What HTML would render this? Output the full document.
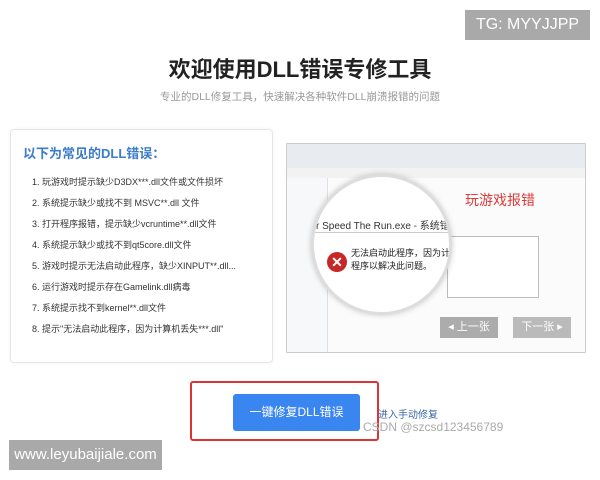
<!DOCTYPE html>
<html><head><meta charset="utf-8"><style>
body{margin:0;width:600px;height:480px;background:#fff;position:relative;overflow:hidden;font-family:"Liberation Sans","Noto Sans CJK SC",sans-serif}
.a{position:absolute}
</style></head><body>
<div class="a" style="left:465px;top:10px;width:125px;height:30px;background:#a9a9a9;color:#fff;font-size:16px;line-height:30px;text-align:center">TG: MYYJJPP</div>
<div class="a" style="left:0;width:600px;top:52px;text-align:center;font-size:22px;font-weight:bold;color:#222">欢迎使用DLL错误专修工具</div>
<div class="a" style="left:0;width:600px;top:89px;text-align:center;font-size:10.5px;color:#999">专业的DLL修复工具，快速解决各种软件DLL崩溃报错的问题</div>
<div class="a" style="left:10px;top:129px;width:261px;height:232px;border:1px solid #e6e6e6;border-radius:4px;box-shadow:0 0 3px rgba(0,0,0,.06)"></div>
<div class="a" style="left:23px;top:143px;font-size:13px;font-weight:bold;color:#3d7cc9">以下为常见的DLL错误：</div>
<div class="a" style="left:32px;top:172px;font-size:9px;color:#333;line-height:21px">
1. 玩游戏时提示缺少D3DX***.dll文件或文件损坏<br>
2. 系统提示缺少或找不到 MSVC**.dll 文件<br>
3. 打开程序报错，提示缺少vcruntime**.dll文件<br>
4. 系统提示缺少或找不到qt5core.dll文件<br>
5. 游戏时提示无法启动此程序，缺少XINPUT**.dll...<br>
6. 运行游戏时提示存在Gamelink.dll病毒<br>
7. 系统提示找不到kernel**.dll文件<br>
8. 提示"无法启动此程序，因为计算机丢失***.dll"</div>
<div class="a" style="left:286px;top:143px;width:298px;height:208px;background:#fbfbfb;border:1px solid #ccc;overflow:hidden">
 <div class="a" style="left:0;top:0;width:298px;height:24px;background:#e8ecf0"></div>
 <div class="a" style="left:0;top:24px;width:298px;height:10px;background:#f2f2f2"></div>
 <div class="a" style="left:0;top:34px;width:40px;height:174px;background:#f7f8f9;border-right:1px solid #e0e0e0"></div>
 <div class="a" style="left:160px;top:92px;width:90px;height:60px;background:#fff;border:1px solid #bbb"></div>
 <div class="a" style="left:24px;top:30px;width:135px;height:135px;border-radius:50%;background:#fff;border:3px solid #ddd;box-shadow:0 0 6px rgba(0,0,0,.2);overflow:hidden">
  <div class="a" style="left:0;top:55px;width:140px;height:1px;background:#ccc"></div>
  <div class="a" style="left:-18px;top:40px;font-size:10px;color:#333;white-space:nowrap">d For Speed The Run.exe - 系统错误</div>
  <div class="a" style="left:13px;top:75px;width:20px;height:20px;border-radius:50%;background:#c62828;color:#fff;font-size:14px;line-height:20px;text-align:center;font-weight:bold">✕</div>
  <div class="a" style="left:37px;top:70px;font-size:9px;color:#222;line-height:13px;white-space:nowrap">无法启动此程序，因为计算机中<br>程序以解决此问题。</div>
 </div>
 <div class="a" style="left:178px;top:46px;font-size:14px;color:#e03a3a">玩游戏报错</div>
 <div class="a" style="left:153px;top:173px;width:58px;height:21px;background:#999;opacity:.8;color:#fff;font-size:11px;line-height:21px;text-align:center">◂ 上一张</div>
 <div class="a" style="left:226px;top:173px;width:58px;height:21px;background:#aaa;opacity:.8;color:#fff;font-size:11px;line-height:21px;text-align:center">下一张 ▸</div>
</div>
<div class="a" style="left:190px;top:381px;width:185px;height:56px;border:2px solid #d33;border-radius:3px"></div>
<div class="a" style="left:233px;top:394px;width:127px;height:37px;background:#3a86f0;border-radius:3px;color:#fff;font-size:12px;line-height:37px;text-align:center">一键修复DLL错误</div>
<div class="a" style="left:378px;top:406px;font-size:10px;color:#3d6aa8">进入手动修复</div>
<div class="a" style="left:363px;top:420px;font-size:12px;color:#aaa">CSDN @szcsd123456789</div>
<div class="a" style="left:9px;top:440px;width:153px;height:30px;background:#a9a9a9;color:#fff;font-size:15px;line-height:30px;text-align:center">www.leyubaijiale.com</div>
</body></html>
